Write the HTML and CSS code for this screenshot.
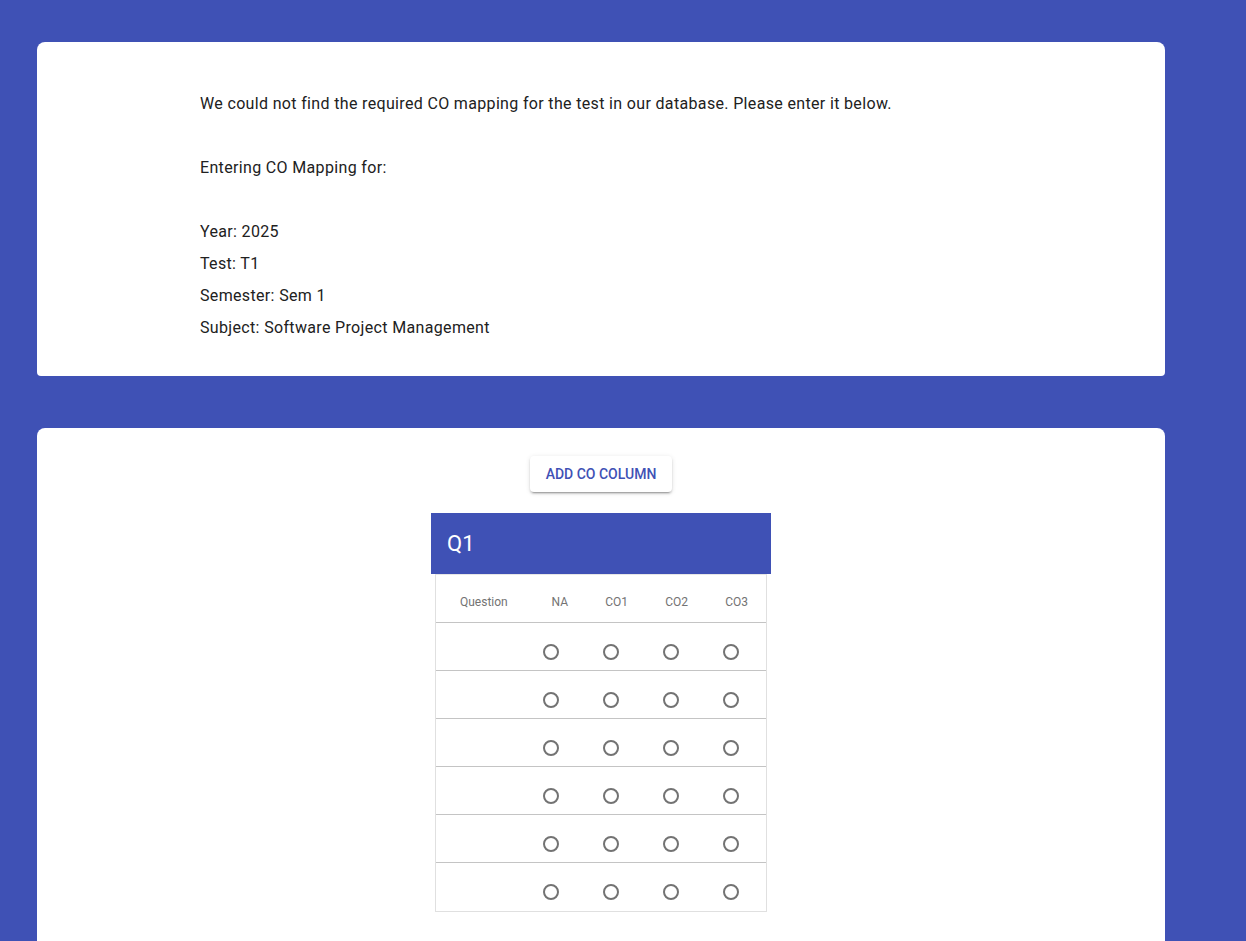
FILE: index.html
```html
<!DOCTYPE html>
<html lang="en">
<head>
<meta charset="utf-8">
<title>CO Mapping</title>
<link rel="stylesheet" href="styles.css">
</head>
<body>
<div class="page">
  <section class="card info-card">
    <div class="info">
      <p class="intro">We could not find the required CO mapping for the test in our database. Please enter it below.</p>
      <p class="intro">Entering CO Mapping for:</p>
      <div class="details">
        <p>Year: 2025</p>
        <p>Test: T1</p>
        <p>Semester: Sem 1</p>
        <p>Subject: Software Project Management</p>
      </div>
    </div>
  </section>

  <section class="card map-card">
    <button class="btn">Add CO Column</button>
    <div class="qcard">
      <div class="qhead">Q1</div>
      <div class="qtable">
        <div class="row head-row">
          <div class="cell qcol">Question</div>
          <div class="cell hcol">NA</div>
          <div class="cell hcol">CO1</div>
          <div class="cell hcol">CO2</div>
          <div class="cell hcol">CO3</div>
          <div class="cell"></div>
        </div>
        <div class="row data-row">
          <div class="cell"></div>
          <div class="cell rcol"><span class="radio"></span></div>
          <div class="cell rcol"><span class="radio"></span></div>
          <div class="cell rcol"><span class="radio"></span></div>
          <div class="cell rcol"><span class="radio"></span></div>
          <div class="cell"></div>
        </div>
        <div class="row data-row">
          <div class="cell"></div>
          <div class="cell rcol"><span class="radio"></span></div>
          <div class="cell rcol"><span class="radio"></span></div>
          <div class="cell rcol"><span class="radio"></span></div>
          <div class="cell rcol"><span class="radio"></span></div>
          <div class="cell"></div>
        </div>
        <div class="row data-row">
          <div class="cell"></div>
          <div class="cell rcol"><span class="radio"></span></div>
          <div class="cell rcol"><span class="radio"></span></div>
          <div class="cell rcol"><span class="radio"></span></div>
          <div class="cell rcol"><span class="radio"></span></div>
          <div class="cell"></div>
        </div>
        <div class="row data-row">
          <div class="cell"></div>
          <div class="cell rcol"><span class="radio"></span></div>
          <div class="cell rcol"><span class="radio"></span></div>
          <div class="cell rcol"><span class="radio"></span></div>
          <div class="cell rcol"><span class="radio"></span></div>
          <div class="cell"></div>
        </div>
        <div class="row data-row">
          <div class="cell"></div>
          <div class="cell rcol"><span class="radio"></span></div>
          <div class="cell rcol"><span class="radio"></span></div>
          <div class="cell rcol"><span class="radio"></span></div>
          <div class="cell rcol"><span class="radio"></span></div>
          <div class="cell"></div>
        </div>
        <div class="row data-row last">
          <div class="cell"></div>
          <div class="cell rcol"><span class="radio"></span></div>
          <div class="cell rcol"><span class="radio"></span></div>
          <div class="cell rcol"><span class="radio"></span></div>
          <div class="cell rcol"><span class="radio"></span></div>
          <div class="cell"></div>
        </div>
      </div>
    </div>
  </section>
</div>
</body>
</html>
```

FILE: styles.css
```css
html, body {
  margin: 0;
  padding: 0;
}
body {
  background: #3f51b5;
  font-family: Roboto, "Liberation Sans", Arial, sans-serif;
  color: #212121;
}
.page {
  padding: 42px 0 0 37px;
  display: flex;
  flex-direction: column;
  gap: 52px;
}
.card {
  width: 1128px;
  background: #fff;
  box-sizing: border-box;
}
.info-card {
  border-radius: 8px 8px 4px 4px;
  padding: 50px 0 36px 163px;
}
.info p {
  margin: 0;
  font-size: 16px;
  line-height: 24px;
  letter-spacing: 0.34px;
}
.intro {
  margin-bottom: 40px !important;
}
.details {
  display: flex;
  flex-direction: column;
  gap: 8px;
}
.map-card {
  border-radius: 8px 8px 0 0;
  padding: 28px 0 60px;
  display: flex;
  flex-direction: column;
  align-items: center;
}
.btn {
  height: 36px;
  padding: 0 16px;
  border: none;
  border-radius: 4px;
  background: #fff;
  color: #3f51b5;
  font-family: Roboto, "Liberation Sans", Arial, sans-serif;
  font-size: 14px;
  font-weight: 500;
  letter-spacing: 0;
  text-transform: uppercase;
  box-shadow: 0 3px 1px -2px rgba(0,0,0,.2), 0 2px 2px 0 rgba(0,0,0,.14), 0 1px 5px 0 rgba(0,0,0,.12);
  cursor: pointer;
}
.qcard {
  width: 340px;
  margin-top: 21px;
}
.qhead {
  height: 61px;
  line-height: 61px;
  background: #3f51b5;
  color: #fff;
  font-size: 22px;
  padding-left: 16px;
}
.qtable {
  margin: 0 4px;
  border: 1px solid #e0e0e0;
  border-top-color: #e6e6e6;
}
.row {
  display: grid;
  grid-template-columns: 85px repeat(4, 60px) 1fr;
  border-bottom: 1px solid #c4c4c4;
  box-sizing: border-box;
}
.row.last {
  border-bottom: none;
}
.head-row {
  height: 48px;
}
.data-row {
  height: 48px;
}
.cell {
  display: flex;
  align-items: center;
  box-sizing: border-box;
}
.head-row .cell {
  padding-top: 7px;
  font-size: 12px;
  line-height: 16px;
  color: #737373;
}
.qcol {
  padding-left: 24px;
}
.hcol {
  justify-content: flex-end;
  padding-right: 13px;
}
.rcol {
  justify-content: center;
  padding-top: 10px;
}
.radio {
  width: 16px;
  height: 16px;
  box-sizing: border-box;
  border: 2px solid #737373;
  border-radius: 50%;
}
```
